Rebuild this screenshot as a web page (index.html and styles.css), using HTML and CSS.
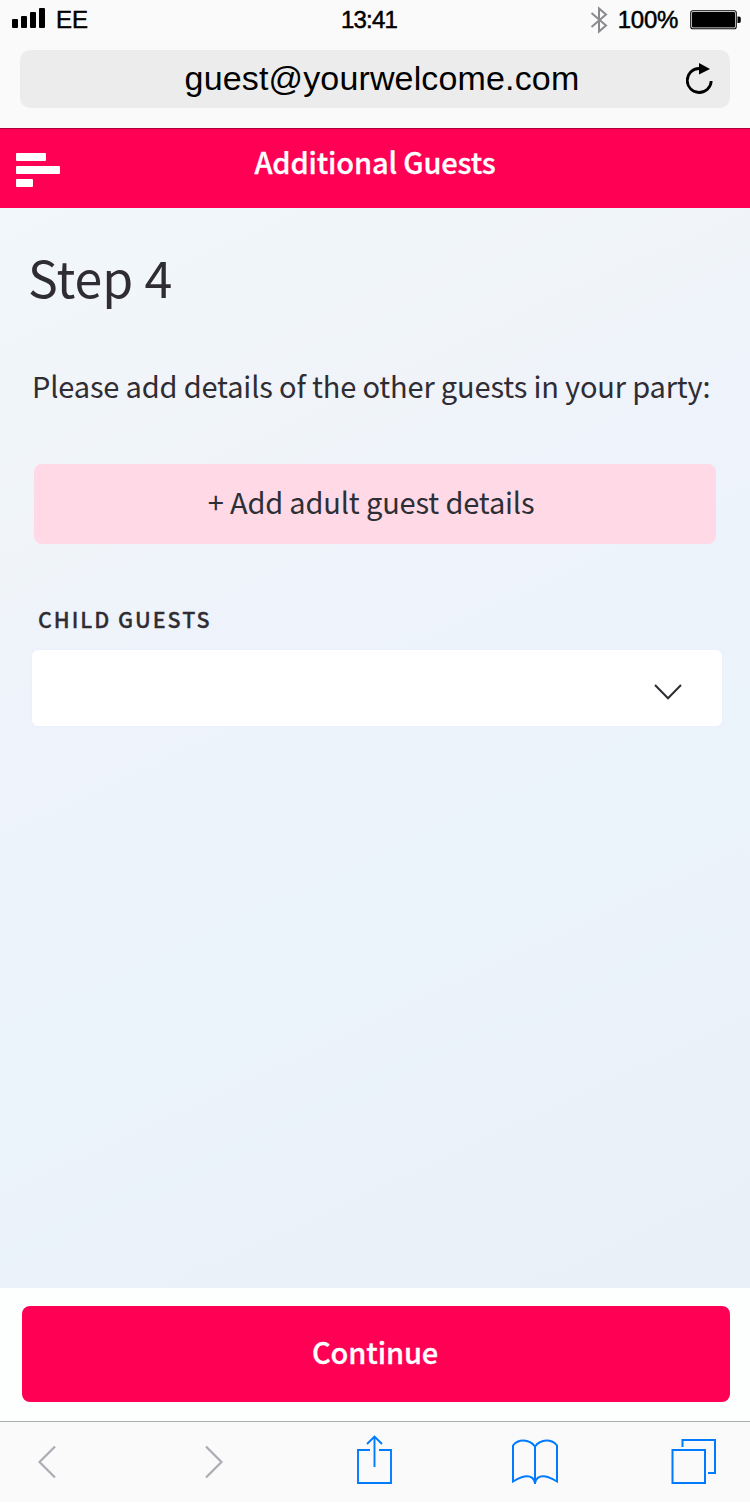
FILE: index.html
```
<!DOCTYPE html>
<html lang="en">
<head>
    <meta charset="UTF-8">
    <meta name="viewport" content="width=device-width, initial-scale=1.0">
    <title>Additional Guests</title>
    <link rel="stylesheet" href="styles.css">
</head>
<body>
    <div class="browser-top">
        <div class="status-bar">
            <div class="status-left">
                <svg class="signal" width="33" height="20" viewBox="0 0 33 20">
                    <rect x="0" y="11" width="6" height="9" rx="1"/>
                    <rect x="9" y="8" width="6" height="12" rx="1"/>
                    <rect x="18" y="4" width="6" height="16" rx="1"/>
                    <rect x="27" y="0" width="6" height="20" rx="1"/>
                </svg>
                <span class="carrier">EE</span>
            </div>
            <span class="clock">13:41</span>
            <div class="status-right">
                <svg class="bluetooth" width="18" height="28" viewBox="0 0 18 28">
                    <path d="M1.500 7L16 19.500L9 25.500V2.500L16 8.500L1.500 21" fill="none" stroke="#8a8a8e" stroke-width="2"/>
                </svg>
                <span class="percent">100%</span>
                <svg class="battery" width="51" height="20" viewBox="0 0 51 20">
                    <rect x="0.75" y="0.75" width="45.5" height="18" rx="2" fill="#fff" stroke="#000" stroke-width="1.1"/>
                    <rect x="2" y="2" width="43" height="15.5" rx="1"/>
                    <path d="M47.500 6.500h1.500q1.800 0 1.800 2v2.500q0 2-1.800 2h-1.500z"/>
                </svg>
            </div>
        </div>
        <div class="address-bar">
            <span class="address">guest@yourwelcome.com</span>
            <svg class="reload" width="28" height="32" viewBox="0 0 28 32">
                <path d="M13 5.500A12 12 0 1 0 25.200 18" fill="none" stroke="#000" stroke-width="2.800"/>
                <path d="M13 0V11.500L24 6z"/>
            </svg>
        </div>
    </div>

    <header class="app-header">
        <svg class="menu" width="44" height="34" viewBox="0 0 44 34" fill="#fff">
            <rect x="0" y="0" width="30" height="8" rx="1"/>
            <rect x="0" y="13" width="44" height="8" rx="1"/>
            <rect x="0" y="26" width="17" height="8" rx="1"/>
        </svg>
        <h1 class="title">Additional Guests</h1>
    </header>

    <main class="content">
        <h2 class="step">Step 4</h2>
        <p class="intro">Please add details of the other guests in your party:</p>
        <button class="add-btn">+ Add adult guest details</button>
        <div class="label">CHILD GUESTS</div>
        <div class="select">
            <svg width="28" height="16" viewBox="0 0 28 16">
                <path d="M1 1L14 14.300L27 1" fill="none" stroke="#302c33" stroke-width="2"/>
            </svg>
        </div>
    </main>

    <footer class="action-bar">
        <button class="continue-btn">Continue</button>
    </footer>

    <nav class="toolbar">
        <svg class="back" width="18" height="34" viewBox="0 0 18 34">
            <path d="M17 1.500L1.500 17L17 32.500" fill="none" stroke="#aeaab2" stroke-width="2.200"/>
        </svg>
        <svg class="forward" width="18" height="34" viewBox="0 0 18 34">
            <path d="M1 1.500L16.500 17L1 32.500" fill="none" stroke="#aeaab2" stroke-width="2.200"/>
        </svg>
        <svg class="share" width="36" height="50" viewBox="0 0 36 50">
            <path d="M13 15H1V48H34V15H22M17.500 32V1.500M10 9L17.500 1.500L25 9" fill="none" stroke="#007aff" stroke-width="1.900"/>
        </svg>
        <svg class="book" width="46" height="46" viewBox="0 0 46 46">
            <path d="M23 7.500C17 -0.500 6 0 1 6.500V42.500C7 39 11 37.300 15 37.300C20 37.300 22 39.500 23 44C24 39.500 26 37.300 31 37.300C35 37.300 39 39 45 42.500V6.500C40 0 29 -0.500 23 7.500V45" fill="none" stroke="#007aff" stroke-width="2"/>
        </svg>
        <svg class="tabs" width="46" height="46" viewBox="0 0 46 46">
            <path d="M1.500 11H34V44H1.500zM11.500 8V1H44V34H37" fill="none" stroke="#007aff" stroke-width="2"/>
        </svg>
    </nav>
</body>
</html>
```
FILE: styles.css
```
* {
    box-sizing: border-box;
}
body {
    margin: 0;
    width: 750px;
    height: 1504px;
    display: flex;
    flex-direction: column;
    background: #fff;
    color: #302c33;
    font-family: "Noto Sans CJK SC", "Noto Sans", sans-serif;
}
svg {
    display: block;
    flex: none;
}
h1, h2, p {
    margin: 0;
}
button {
    border: none;
    padding: 0;
    font-family: inherit;
    cursor: pointer;
}

/* browser chrome */
.browser-top {
    height: 128px;
    background: #fafafa;
    color: #000;
    font-family: "Liberation Sans", Arial, sans-serif;
}
.status-bar {
    height: 50px;
    padding: 0 9px 10px 12px;
    display: grid;
    grid-template-columns: 1fr auto 1fr;
    align-items: center;
    font-size: 24px;
    line-height: 40px;
    -webkit-text-stroke: 0.5px #000;
}
.status-left, .status-right {
    display: flex;
    align-items: center;
}
.status-left {
    gap: 11px;
}
.status-right {
    justify-content: flex-end;
}
.signal {
    margin-top: -4px;
}
.clock {
    margin-right: 15px;
    letter-spacing: -0.8px;
}
.bluetooth {
    margin-right: 10px;
}
.percent {
    letter-spacing: -0.3px;
}
.battery {
    margin-left: 12px;
}
.address-bar {
    height: 58px;
    margin: 0 20px;
    padding: 0 16px 0 58px;
    border-radius: 10px;
    background: #ececec;
    display: flex;
    align-items: center;
}
.address {
    flex: 1;
    text-align: center;
    font-size: 34px;
    line-height: 56px;
    letter-spacing: 0.15px;
    margin-top: -3px;
}

/* page */
.app-header {
    height: 80px;
    padding: 0 16px;
    display: grid;
    grid-template-columns: 44px 1fr 44px;
    background: #ff0055;
    border-top: 1px solid #b0003b;
}
.menu {
    margin-top: 24px;
}
.title {
    color: #fff;
    font-size: 29px;
    font-weight: 500;
    line-height: 64px;
    letter-spacing: -0.15px;
    text-align: center;
    -webkit-text-stroke: 0.3px #fff;
}
.content {
    height: 1080px;
    padding: 38px 28px 0 32px;
    background: linear-gradient(155deg, #f2f7fc 0%, #f0f4f8 25%, #eef3fc 38%, #ebf3fb 60%, #e9f0f8 100%);
}
.step {
    margin-left: -4px;
    font-size: 50px;
    font-weight: 400;
    line-height: 60px;
}
.intro {
    margin-top: 58px;
    font-size: 29px;
    line-height: 42px;
    letter-spacing: -0.16px;
    white-space: nowrap;
}
.add-btn {
    display: block;
    width: 682px;
    height: 80px;
    margin: 58px 0 0 2px;
    padding: 0 8px 6px 0;
    border-radius: 8px;
    background: #ffd9e5;
    color: #2d2f36;
    font-size: 29px;
    letter-spacing: -0.16px;
}
.label {
    margin: 60px 0 0 6px;
    font-size: 21.5px;
    font-weight: 500;
    line-height: 30px;
    letter-spacing: 1.95px;
    -webkit-text-stroke: 0.3px #302c33;
}
.select {
    height: 76px;
    margin-top: 16px;
    padding: 8px 40px 0 0;
    border-radius: 6px;
    background: #fff;
    box-shadow: 0 0 0 2px #ebf2fb;
    display: flex;
    align-items: center;
    justify-content: flex-end;
}
.action-bar {
    height: 133px;
    padding: 18px 20px 0 22px;
    background: #fdfffe;
}
.continue-btn {
    width: 100%;
    height: 96px;
    padding: 0 2px 6px 0;
    border-radius: 8px;
    background: #ff0055;
    color: #fff;
    font-size: 29px;
    font-weight: 500;
    letter-spacing: -0.1px;
    -webkit-text-stroke: 0.3px #fff;
}

/* bottom toolbar */
.toolbar {
    height: 81px;
    padding-left: 38px;
    border-top: 1px solid #adadad;
    background: #fafafa;
    display: flex;
    align-items: center;
}
.forward {
    margin-left: 149px;
}
.share {
    margin: 0 0 4px 134px;
}
.book {
    margin-left: 119px;
}
.tabs {
    margin-left: 113px;
}
```
